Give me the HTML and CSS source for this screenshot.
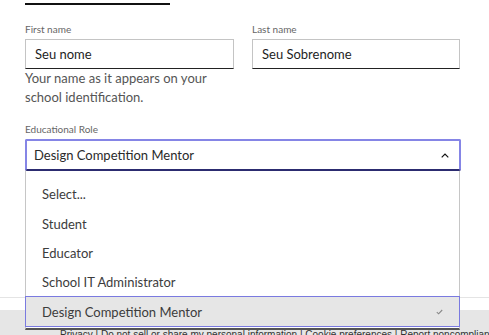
FILE: index.html
```html
<!DOCTYPE html>
<html lang="en">
<head>
<meta charset="utf-8">
<title>Education form</title>
<link rel="stylesheet" href="styles.css">
</head>
<body>
<div class="page">
  <div class="form">
    <a class="alt-link" href="#">Use a different email address</a>
    <div class="name-row">
      <div class="field">
        <label class="label">First name</label>
        <div class="input">Seu nome</div>
        <p class="helper">Your name as it appears on your school identification.</p>
      </div>
      <div class="field">
        <label class="label">Last name</label>
        <div class="input">Seu Sobrenome</div>
      </div>
    </div>
    <div class="field role-field">
      <label class="label">Educational Role</label>
      <div class="select">
        <span>Design Competition Mentor</span>
        <svg class="chevron" width="8" height="5" viewBox="0 0 8 5"><path d="M0.7 4.3 L4 1 L7.3 4.3" fill="none" stroke="#111" stroke-width="1.2"/></svg>
      </div>
      <ul class="menu">
        <li class="option">Select...</li>
        <li class="option">Student</li>
        <li class="option">Educator</li>
        <li class="option">School IT Administrator</li>
        <li class="option selected">Design Competition Mentor
          <svg class="check" width="7" height="6" viewBox="0 0 7 6"><path d="M0.8 3.2 L2.6 4.8 L6.2 1" fill="none" stroke="#888" stroke-width="1.1"/></svg>
        </li>
      </ul>
    </div>
  </div>
  <div class="divider"></div>
  <footer class="footer">
    <p class="footer-links">Privacy | Do not sell or share my personal information | Cookie preferences | Report noncompliance | Terms of use</p>
  </footer>
</div>
</body>
</html>
```
FILE: styles.css
```css
html, body {
  margin: 0;
  padding: 0;
  background: #fff;
  overflow: hidden;
}
body {
  font-family: Lato, "Noto Sans", sans-serif;
  color: #222;
}
.page {
  width: 489px;
  height: 335px;
  overflow: hidden;
}
.form {
  padding: 0 28px 0 25px;
  margin-top: -13px;
}
.alt-link {
  display: inline-block;
  font-size: 13px;
  line-height: 14px;
  padding-bottom: 2px;
  color: #666;
  text-decoration: none;
  border-bottom: 2px solid #111;
  width: 145px;
  white-space: nowrap;
  overflow: hidden;
}
.name-row {
  display: grid;
  grid-template-columns: 209px 208px;
  column-gap: 18px;
  margin-top: 15px;
}
.field {
  display: flex;
  flex-direction: column;
}
.label {
  font-size: 10px;
  line-height: 12px;
  color: #666;
  margin-bottom: 4px;
}
.input {
  box-sizing: border-box;
  height: 30px;
  border: 1px solid #c4c4c4;
  border-bottom: 1.5px solid #222;
  padding: 0 9px;
  font-size: 13px;
  line-height: 28px;
  color: #1e1e1e;
}
.helper {
  margin: 0;
  font-size: 13px;
  line-height: 19px;
  color: #555;
}
.role-field {
  position: relative;
  margin-top: 16px;
}
.select {
  box-sizing: border-box;
  height: 32px;
  border: 2px solid #8585e6;
  border-bottom-color: #2c2c70;
  border-radius: 2px;
  padding: 0 10px 0 7px;
  display: flex;
  align-items: center;
  justify-content: space-between;
  font-size: 13px;
  color: #2a2a2a;
}
.menu {
  position: absolute;
  left: 0;
  top: 48px;
  width: 435px;
  box-sizing: border-box;
  margin: 0;
  padding: 8px 0 0;
  list-style: none;
  background: #fff;
  border: 1px solid #c6c6c6;
  border-top: none;
  border-bottom: 2px solid #555;
  z-index: 2;
}
.option {
  height: 29px;
  display: flex;
  align-items: center;
  justify-content: space-between;
  padding: 0 16px 0 16px;
  font-size: 13px;
  color: #3c3c3c;
}
.option:first-child {
  height: 30px;
}
.option.selected {
  box-sizing: border-box;
  height: 31px;
  margin: 0 -1px 1px;
  background: #e6e6e6;
  border: 1.5px solid #7a7ae0;
}
.divider {
  margin-top: 126px;
  border-top: 1px solid #e4e4e4;
}
.footer {
  margin-top: 12px;
  background: #e6e6e6;
  height: 40px;
  padding-top: 19px;
}
.footer-links {
  margin: 0 0 0 60px;
  font-family: "Liberation Sans", Arial, sans-serif;
  font-size: 10px;
  line-height: 12px;
  color: #333;
  white-space: nowrap;
}
```
